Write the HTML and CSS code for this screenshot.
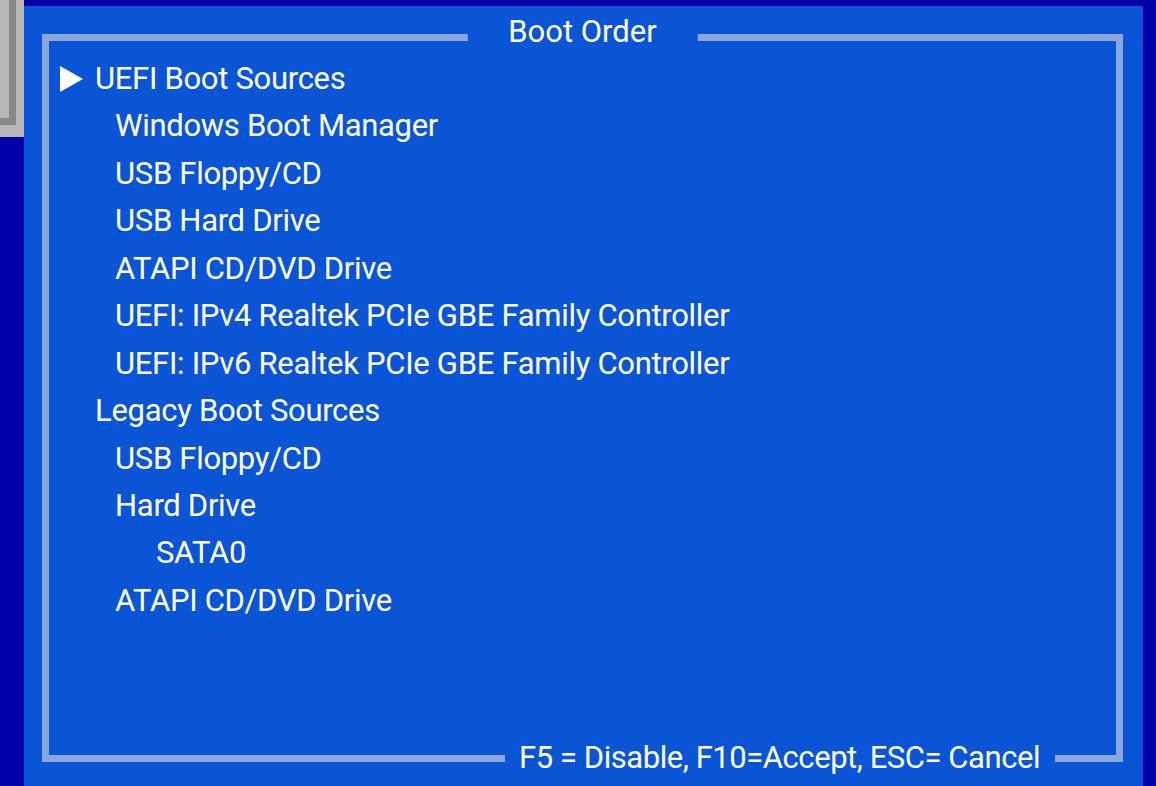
FILE: index.html
```html
<!DOCTYPE html>
<html lang="en">
<head>
    <meta charset="UTF-8">
    <title>Boot Order</title>
    <link rel="stylesheet" href="styles.css">
</head>
<body>
    <!-- Edge of the setup window behind the dialog -->
    <div class="back-window"><div class="back-window-edge"></div></div>

    <div class="panel">
        <div class="frame">
            <div class="frame-title">Boot Order</div>

            <ul class="boot-list">
                <li class="item level-0 selected">UEFI Boot Sources</li>
                <li class="item level-1">Windows Boot Manager</li>
                <li class="item level-1">USB Floppy/CD</li>
                <li class="item level-1">USB Hard Drive</li>
                <li class="item level-1">ATAPI CD/DVD Drive</li>
                <li class="item level-1">UEFI: IPv4 Realtek PCIe GBE Family Controller</li>
                <li class="item level-1">UEFI: IPv6 Realtek PCIe GBE Family Controller</li>
                <li class="item level-0">Legacy Boot Sources</li>
                <li class="item level-1">USB Floppy/CD</li>
                <li class="item level-1">Hard Drive</li>
                <li class="item level-2">SATA0</li>
                <li class="item level-1">ATAPI CD/DVD Drive</li>
            </ul>

            <div class="frame-keys">F5 = Disable, F10=Accept, ESC= Cancel</div>
        </div>
    </div>
</body>
</html>
```

FILE: styles.css
```css
/* Reset */
* {
    box-sizing: border-box;
    margin: 0;
    padding: 0;
}
body {
    display: grid;
    grid-template-columns: 24px 1119px 13px;
    height: 786px;
    overflow: hidden;
    background: #0000a6;
    font-family: "Roboto", "Liberation Sans", sans-serif;
    color: #fff;
}

/* Window behind the dialog */
.back-window {
    width: 24px;
    height: 137px;
    background: #b6b6b6;
}
.back-window-edge {
    width: 16px;
    height: 125px;
    border-right: 7px solid #888;
    border-bottom: 7px solid #888;
}

/* Dialog */
.panel {
    margin-top: 6px;
    height: 780px;
    padding: 28px 20px 24px 18px;
    background: #0a55d6;
}
.frame {
    position: relative;
    height: 728px;
    border: 7px solid #8ba7db;
}

/* Labels sitting on the frame line */
.frame-title,
.frame-keys {
    position: absolute;
    font-size: 31px;
    line-height: 36px;
    white-space: nowrap;
    background: #0a55d6;
}
.frame-title {
    top: -27px;
    left: 50%;
    transform: translateX(-50%);
    padding: 0 41px;
}
.frame-keys {
    right: 61px;
    bottom: -21px;
    padding: 0 15px 0 14px;
    letter-spacing: -0.45px;
}

/* Boot list */
.boot-list {
    list-style: none;
    padding-top: 14px;
}
.item {
    position: relative;
    height: 47.45px;
    line-height: 47.45px;
    font-size: 31px;
    letter-spacing: -0.3px;
    white-space: nowrap;
}
.level-0 { padding-left: 46px; }
.level-1 { padding-left: 66px; }
.level-2 { padding-left: 107px; }

/* Selection arrow */
.selected::before {
    content: "";
    position: absolute;
    left: 11px;
    top: 11px;
    border-top: 13px solid transparent;
    border-bottom: 13px solid transparent;
    border-left: 23px solid #fff;
}
```
